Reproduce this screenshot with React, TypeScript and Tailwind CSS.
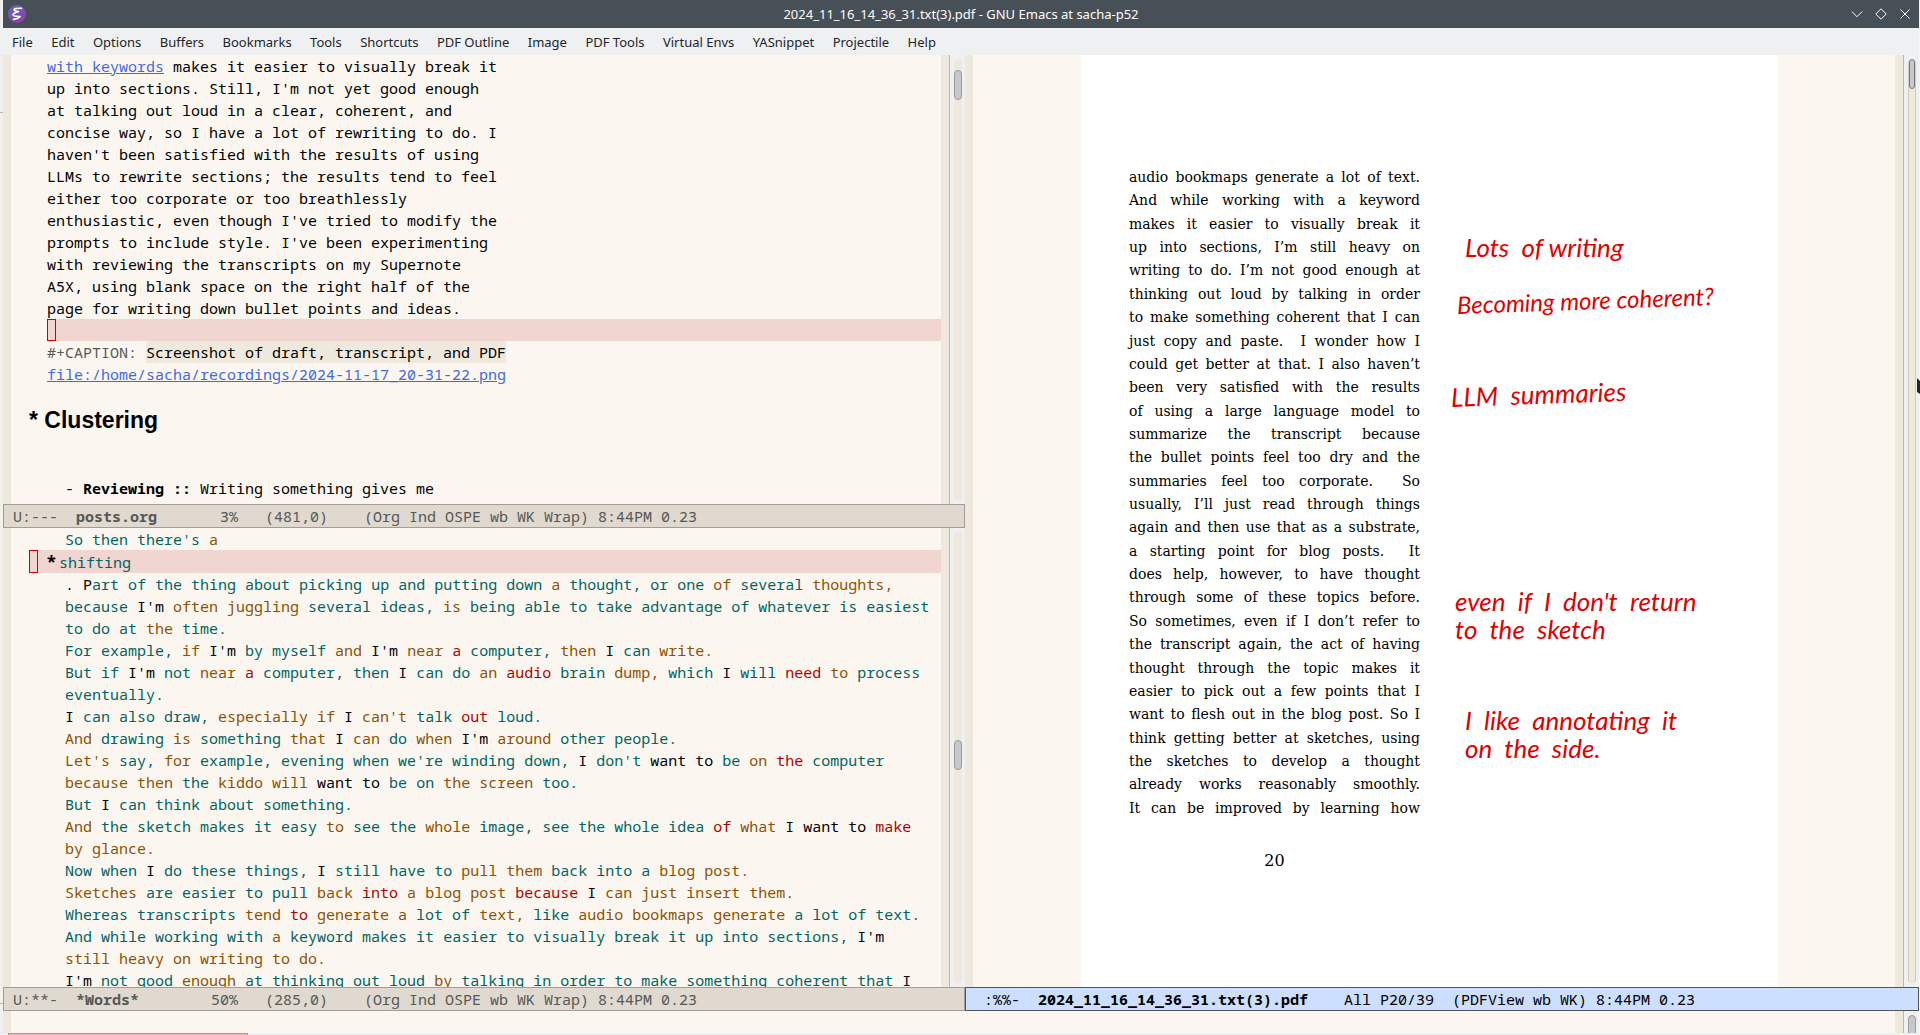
import type { ReactNode } from 'react';

const MENUS = [
  'File', 'Edit', 'Options', 'Buffers', 'Bookmarks', 'Tools', 'Shortcuts', 'PDF Outline',
  'Image', 'PDF Tools', 'Virtual Envs', 'YASnippet', 'Projectile', 'Help',
];

const DRAFT = [
  "up into sections. Still, I'm not yet good enough",
  'at talking out loud in a clear, coherent, and',
  'concise way, so I have a lot of rewriting to do. I',
  "haven't been satisfied with the results of using",
  'LLMs to rewrite sections; the results tend to feel',
  'either too corporate or too breathlessly',
  "enthusiastic, even though I've tried to modify the",
  "prompts to include style. I've been experimenting",
  'with reviewing the transcripts on my Supernote',
  'A5X, using blank space on the right half of the',
  'page for writing down bullet points and ideas.',
];

// Word confidence: ~ medium, ! low, ^ plain, = (or nothing) high
const TRANSCRIPT = [
  '^. ^P=art of the thing about picking up and putting down ~a thought, or one ~of several ~thoughts,',
  "because ^I'm ~often ~juggling several ideas, ~is being able to take advantage of whatever is easiest",
  'to do at ~the time.',
  "For example, ~if ^I'm by myself ~and ^I'm ~near !a computer, ~then ^I can ~write.",
  "But if ^I'm not ~near !a computer, then ^I can do ~an !audio brain ~dump, which ^I will !need ~to process",
  'eventually.',
  "^I can also draw, ~especially ~if ^I ~can't talk !out loud.",
  "~And drawing ~is something ~that ^I ~can do ~when ^I'm ~around other people.",
  "~Let's say, ~for example, evening when we're winding down, ^I don't ^want ^to be ~on !the computer",
  '~because ~then the ~kiddo ~will ^want ^to be on ~the ~screen too.',
  'But ^I can think about something.',
  '~And the sketch makes it easy ~to see the ~whole image, see the whole idea !of ~what ^I ^want ^to !make',
  '~by ~glance.',
  'Now when ^I do these things, ^I still have to ~pull ~them back into a ~blog ~post.',
  '~Sketches are easier to pull ~back !into ~a ~blog ~post !because ^I ~can ~just ~insert ~them.',
  'Whereas transcripts ~tend !to ~generate ~a lot of ~text, like ~audio ~bookmaps ~generate a lot of text.',
  "And while working with ~a keyword makes it easier to visually break it up into sections, ^I'm",
  '~still ~heavy ~on ~writing ~to ~do.',
  "^I'm not good ~enough at thinking out loud ~by talking in order to make something coherent that ^I",
];

const PDF_LINES = [
  'audio bookmaps generate a lot of text.',
  'And while working with a keyword',
  'makes it easier to visually break it',
  'up into sections, I’m still heavy on',
  'writing to do. I’m not good enough at',
  'thinking out loud by talking in order',
  'to make something coherent that I can',
  'just copy and paste.\u00a0 I wonder how I',
  'could get better at that. I also haven’t',
  'been very satisfied with the results',
  'of using a large language model to',
  'summarize the transcript because',
  'the bullet points feel too dry and the',
  'summaries feel too corporate.\u00a0 So',
  'usually, I’ll just read through things',
  'again and then use that as a substrate,',
  'a starting point for blog posts.\u00a0 It',
  'does help, however, to have thought',
  'through some of these topics before.',
  'So sometimes, even if I don’t refer to',
  'the transcript again, the act of having',
  'thought through the topic makes it',
  'easier to pick out a few points that I',
  'want to flesh out in the blog post. So I',
  'think getting better at sketches, using',
  'the sketches to develop a thought',
  'already works reasonably smoothly.',
  'It can be improved by learning how',
];

const TONES: Record<string, string> = {
  '~': 'text-[#8f5000]',
  '!': 'text-[#b00000]',
  '^': 'text-black',
  '=': 'text-[#006464]',
};

function TranscriptLine({ text }: { text: string }) {
  const words = [...text.matchAll(/([~!^=]?)([^~!^=\s]+\s*)/g)];
  return (
    <div className="h-[22px]">
      {words.map((w, i) => (
        <span key={i} className={TONES[w[1] || '=']}>
          {w[2]}
        </span>
      ))}
    </div>
  );
}

function Scrollbar({ thumb, outlined }: { thumb: string; outlined?: boolean }) {
  return (
    <div className="w-4 shrink-0 border-l border-[#b8b8b8] bg-[#eef0f2] py-1 pl-1 pr-[3px]">
      <div
        className={`h-full overflow-hidden rounded-full bg-[#efe8dd] ${
          outlined ? 'border-x border-[#cfcac2]' : ''
        }`}
      >
        <div className={`h-[30px] rounded-full border border-[#999b9d] bg-[#c6c8ca] ${thumb}`} />
      </div>
    </div>
  );
}

function Fringe() {
  return <div className="w-2 shrink-0 bg-[#efe8dd]" />;
}

function Pane({ className, thumb, outlined, children }: {
  className: string;
  thumb: string;
  outlined?: boolean;
  children: ReactNode;
}) {
  return (
    <div className={`flex min-h-0 overflow-hidden ${className}`}>
      <Fringe />
      <div className="min-w-0 flex-1 overflow-hidden">{children}</div>
      <Fringe />
      <Scrollbar thumb={thumb} outlined={outlined} />
    </div>
  );
}

function ModeLine({ active, before, name, after }: {
  active?: boolean;
  before: string;
  name: string;
  after: string;
}) {
  return (
    <div
      className={`h-6 shrink-0 overflow-hidden whitespace-pre border pl-[9px] leading-[22px] ${
        active ? 'border-[#545454] bg-[#ccdfff] text-black' : 'border-[#a59a94] bg-[#dfd9cf] text-[#585858]'
      }`}
    >
      {before}
      <b>{name}</b>
      {after}
    </div>
  );
}

function TitleBar() {
  return (
    <header className="flex h-7 shrink-0 items-center bg-[#475057] font-['Noto_Sans',sans-serif] text-[13px] text-[#fcfcfc]">
      <div className="flex w-20 pl-[5px]">
        <svg width="18" height="18" viewBox="0 0 18 18" aria-label="Emacs" role="img">
          <defs>
            <linearGradient id="emacs" x1="0" y1="0" x2="0.6" y2="1">
              <stop offset="0" stopColor="#6467c2" />
              <stop offset="1" stopColor="#8d3fa8" />
            </linearGradient>
          </defs>
          <circle cx="9" cy="9" r="9" fill="url(#emacs)" />
          <path
            d="M13.4 3.4C10 3 5.2 3.6 6.2 5.2C6.8 6.3 9.6 6.2 10.6 6.6C8.3 7.3 4.4 8.6 5 10.2C5.6 11.6 9.6 11 12.2 11.6C11 12.6 8.4 14 5.6 14.4"
            fill="none"
            stroke="#fff"
            strokeWidth="1.6"
            strokeLinecap="round"
            strokeLinejoin="round"
          />
        </svg>
      </div>
      <h1 className="flex-1 pt-px text-center">2024_11_16_14_36_31.txt(3).pdf - GNU Emacs at sacha-p52</h1>
      <div className="flex w-20 justify-end pr-[2px]">
        <button aria-label="Minimize" className="flex h-6 w-6 items-center justify-center">
          <svg width="12" height="12" viewBox="0 0 12 12" fill="none" stroke="currentColor">
            <path d="M.8 3.5 6 8.7 11.2 3.5" />
          </svg>
        </button>
        <button aria-label="Restore" className="flex h-6 w-6 items-center justify-center">
          <svg width="12" height="12" viewBox="0 0 12 12" fill="none" stroke="currentColor">
            <path d="M6 .8 11.2 6 6 11.2 .8 6Z" />
          </svg>
        </button>
        <button aria-label="Close" className="flex h-6 w-6 items-center justify-center">
          <svg width="12" height="12" viewBox="0 0 12 12" fill="none" stroke="currentColor">
            <path d="M1.5 1.5l9 9M10.5 1.5l-9 9" />
          </svg>
        </button>
      </div>
    </header>
  );
}

function MenuBar() {
  return (
    <nav className="h-[27px] shrink-0 bg-[#eef0f2] font-['Noto_Sans',sans-serif] text-[13px] text-[#232629]">
      <div className="flex h-full max-w-[942px] items-center justify-between pt-[2px]">
        {MENUS.map((m) => (
          <button key={m} className="px-[9px]">
            {m}
          </button>
        ))}
      </div>
    </nav>
  );
}

function DraftBuffer() {
  return (
    <div className="whitespace-pre pl-9 leading-[22px]">
      <div className="h-[22px]">
        <a href="#keywords" className="text-[#3f6ae0] underline">with keywords</a> makes it easier to visually break it
      </div>
      {DRAFT.map((line) => (
        <div key={line} className="h-[22px]">{line}</div>
      ))}
      <div className="h-[22px] bg-[#f1d5d0]">
        <div className="h-full w-[9px] border border-[#d00000]" />
      </div>
      <div className="h-[22px] text-[#595959]">
        #+CAPTION: <span className="inline-block bg-[#efe9dd] text-black">Screenshot of draft, transcript, and PDF</span>
      </div>
      <div className="h-[22px]">
        <a href="#screenshot" className="text-[#3f6ae0] underline">
          file:/home/sacha/recordings/2024-11-17_20-31-22.png
        </a>
      </div>
      <h2 className="-ml-[18px] h-[70px] font-['Liberation_Sans',sans-serif] text-[23px] font-bold leading-[71px]">
        * Clustering
      </h2>
      <div className="h-[22px]" />
      <div className="h-[22px] pl-[18px]">
        - <b>Reviewing ::</b> Writing something gives me
      </div>
    </div>
  );
}

function WordsBuffer() {
  return (
    <div className="whitespace-pre leading-[22px]">
      <div className="pl-[54px]">
        <TranscriptLine text="So then there's ~a" />
      </div>
      <div className="ml-[18px] flex h-[23px] bg-[#f1d5d0] leading-[24px]">
        <span className="w-[9px] border border-[#d00000]" />
        <span className="w-[8px]" />
        <span className="w-[13px] text-[18px] font-bold">*</span>
        <span className="text-[#006464]">shifting</span>
      </div>
      <div className="pl-[54px]">
        {TRANSCRIPT.map((line) => (
          <TranscriptLine key={line} text={line} />
        ))}
      </div>
    </div>
  );
}

function Note({ className, children }: { className: string; children: ReactNode }) {
  return (
    <p className={`absolute origin-left whitespace-pre font-[Lato,sans-serif] italic leading-[28px] text-[#e00000] ${className}`}>
      {children}
    </p>
  );
}

function PdfPage() {
  return (
    <div className="grid h-full grid-cols-[108fr_697fr_117fr]">
      <div />
      <div className="relative bg-white pl-12 pt-[112px] font-['DejaVu_Serif',serif] text-[14px] text-black">
        <div className="grid h-[654px] w-[291px] auto-rows-fr">
          {PDF_LINES.map((line) => (
            <p key={line} className="whitespace-nowrap text-justify [text-align-last:justify]">
              {line}
            </p>
          ))}
        </div>
        <p className="w-[291px] pt-7 text-center text-[16px]">20</p>

        {/* Pen annotations */}
        <Note className="left-[384px] top-[178px] text-[26px]">Lots  of writing</Note>
        <Note className="left-[376px] top-[236px] -rotate-2 text-[24px]">Becoming more coherent?</Note>
        <Note className="left-[370px] top-[328px] -rotate-2 text-[26px]">LLM  summaries</Note>
        <Note className="left-[374px] top-[532px] text-[26px]">{"even  if  I  don't  return\nto  the  sketch"}</Note>
        <Note className="left-[384px] top-[651px] text-[26px]">{'I  like  annotating  it\non  the  side.'}</Note>
      </div>
      <div />
    </div>
  );
}

export default function App() {
  return (
    <div className="relative flex h-screen overflow-hidden bg-[#eef0f2] font-['Noto_Sans_Mono','DejaVu_Sans_Mono',monospace] text-[15px] text-black">
      {/* Sliver of the desktop behind the window */}
      <div className="flex w-[3px] shrink-0 flex-col">
        <div className="h-[113px] border-b border-[#b8b8b8]" />
        <div className="flex-1 bg-[#f2f1ea]" />
        <div className="h-8 border-t border-[#b8b8b8]" />
      </div>

      <div className="flex min-w-0 flex-1 flex-col">
        <TitleBar />
        <MenuBar />
        <main className="grid min-h-0 flex-1 grid-cols-[962fr_954fr] bg-[#fbf7f0]">
          <section className="flex min-h-0 min-w-0 flex-col">
            <Pane className="flex-[449]" thumb="mt-[11px]">
              <DraftBuffer />
            </Pane>
            <ModeLine before="U:---  " name="posts.org" after="       3%   (481,0)    (Org Ind OSPE wb WK Wrap) 8:44PM 0.23" />
            <Pane className="flex-[459]" thumb="mt-[208px]">
              <WordsBuffer />
            </Pane>
            <ModeLine before="U:**-  " name="*Words*" after="        50%   (285,0)    (Org Ind OSPE wb WK Wrap) 8:44PM 0.23" />
          </section>
          <section className="flex min-h-0 min-w-0 flex-col">
            <Pane className="flex-1" thumb="mt-0 border-[#77797b] bg-[#b9bbbd]" outlined>
              <PdfPage />
            </Pane>
            <ModeLine active before=" :%%-  " name="2024_11_16_14_36_31.txt(3).pdf" after="    All P20/39  (PDFView wb WK) 8:44PM 0.23" />
          </section>
        </main>
        <footer className="flex h-[22px] shrink-0 overflow-hidden bg-[#fbf7f0]">
          <Fringe />
          <div className="flex-1" />
          <Fringe />
          {/* Echo area is shorter than the thumb, so only its top shows */}
          <div className="w-4 shrink-0 border-l border-[#b8b8b8] bg-[#eef0f2] pl-1 pr-[3px] pt-1">
            <div className="h-[30px] rounded-full border border-[#999b9d] bg-[#c6c8ca]" />
          </div>
        </footer>
        <div className="h-[2px] shrink-0 pl-[5px]">
          <div className="h-full w-[240px] border border-b-0 border-[#a59a94] bg-[#efb4c0]" />
        </div>
      </div>
      <div className="w-px shrink-0 bg-[#f6f6f4]" />

      {/* Mouse pointer at the screen edge */}
      <svg className="absolute right-0 top-[378px]" width="3" height="16" viewBox="0 0 3 16">
        <path d="M0 0 3 3V16L0 14Z" fill="#232629" />
      </svg>
    </div>
  );
}
